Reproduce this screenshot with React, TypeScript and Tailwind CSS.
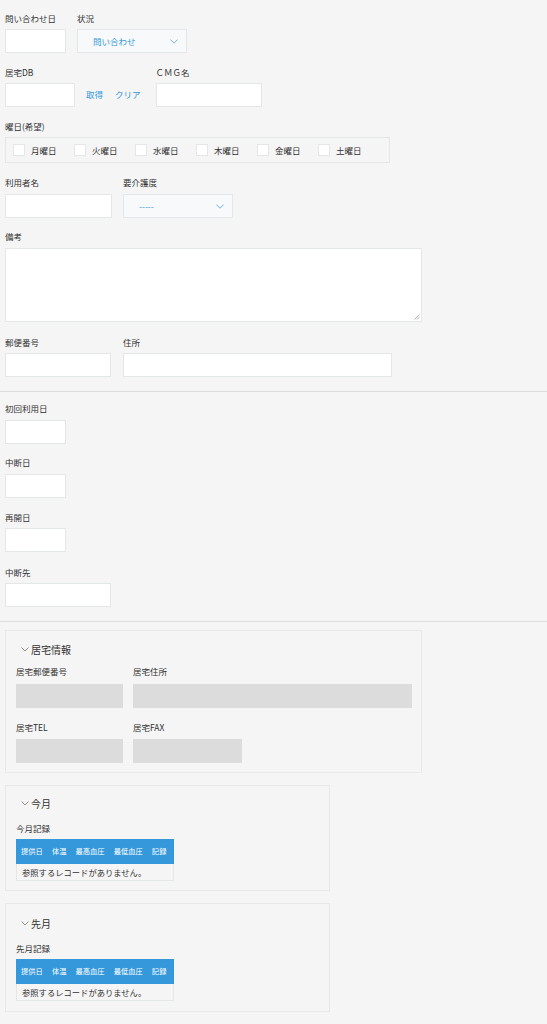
import React from "react";

const font = { fontFamily: '"Noto Sans CJK JP", "Noto Sans", sans-serif' };

function Label({ children, className = "" }: { children: React.ReactNode; className?: string }) {
  return <div className={`h-[12px] text-[8.5px] leading-[12px] text-[#333] whitespace-nowrap ${className}`}>{children}</div>;
}

function Input({ w, className = "" }: { w: string; className?: string }) {
  return <div className={`${w} h-[24px] bg-white border border-[#e3e7e8] ${className}`} />;
}

function Chevron() {
  return (
    <svg width="8" height="5" viewBox="0 0 8 5" fill="none">
      <path d="M0.5 0.6 L4 4.2 L7.5 0.6" stroke="#6fb1e6" strokeWidth="1" />
    </svg>
  );
}

function Select({ w, text }: { w: string; text: string }) {
  return (
    <div className={`${w} h-[24px] bg-[#f7f9fa] border border-[#e3e7e8] flex items-center justify-between pl-[15px] pr-[8px]`}>
      <span className="text-[8.5px] text-[#3498db]">{text}</span>
      <Chevron />
    </div>
  );
}

function Field({ label, children, className = "", gap = "mt-[5px]" }: { label: string; children: React.ReactNode; className?: string; gap?: string }) {
  return (
    <div className={`flex flex-col ${className}`}>
      <Label>{label}</Label>
      <div className={gap}>{children}</div>
    </div>
  );
}

function GroupHeader({ text }: { text: string }) {
  return (
    <div className="flex items-center h-[14px] pl-[15px] text-[10px] text-[#333]">
      <svg width="8" height="5" viewBox="0 0 8 5" fill="none" className="mr-[2px] mt-[1px]">
        <path d="M0.5 0.5 L4 4 L7.5 0.5" stroke="#888" strokeWidth="0.9" />
      </svg>
      {text}
    </div>
  );
}

function RecordTable() {
  const cols = ["提供日", "体温", "最高血圧", "最低血圧", "記録"];
  return (
    <div className="w-[158px]">
      <div className="h-[25px] bg-[#3498db] flex items-center pl-[5px] gap-[9px] text-[7.3px] text-white whitespace-nowrap overflow-hidden">
        {cols.map((c) => (
          <span key={c}>{c}</span>
        ))}
      </div>
      <div className="h-[17px] border border-t-0 border-[#e3e7e8] flex items-center pl-[5px] text-[8.3px] text-[#333] whitespace-nowrap">
        参照するレコードがありません。
      </div>
    </div>
  );
}

export default function App() {
  const days = ["月曜日", "火曜日", "水曜日", "木曜日", "金曜日", "土曜日"];
  return (
    <div className="w-[547px] min-h-[1024px] bg-[#f5f5f5] pb-[12px]" style={font}>
      <div className="px-[5px] pt-[12px]">
        {/* Row 1 */}
        <div className="flex gap-[11px]">
          <Field label="問い合わせ日">
            <Input w="w-[61px]" />
          </Field>
          <Field label="状況">
            <Select w="w-[110px]" text="問い合わせ" />
          </Field>
        </div>

        {/* Row 2 */}
        <div className="flex mt-[13px]">
          <Field label="居宅DB">
            <Input w="w-[70px]" />
          </Field>
          <div className="flex items-end ml-[11px] h-[41px] pb-[6px] gap-[12px] text-[8.5px] text-[#3498db]">
            <span>取得</span>
            <span>クリア</span>
          </div>
          <Field label="ＣＭＧ名" className="ml-[15px]">
            <Input w="w-[106px]" />
          </Field>
        </div>

        {/* Row 3 */}
        <div className="mt-[13px]">
          <Label>曜日(希望)</Label>
          <div className="mt-[5px] w-[385px] h-[26px] border border-[#e3e7e8] flex items-center pl-[7px]">
            {days.map((d) => (
              <div key={d} className="w-[61px] flex items-center">
                <div className="w-[12px] h-[12px] bg-white border border-[#e3e7e8]" />
                <span className="ml-[6px] text-[8.5px] text-[#333]">{d}</span>
              </div>
            ))}
          </div>
        </div>

        {/* Row 4 */}
        <div className="flex mt-[13px] gap-[11px]">
          <Field label="利用者名">
            <Input w="w-[107px]" className="mt-[1px]" />
          </Field>
          <Field label="要介護度">
            <div className="mt-[1px]">
              <Select w="w-[110px]" text="-----" />
            </div>
          </Field>
        </div>

        {/* Row 5 */}
        <div className="mt-[12px]">
          <Label>備考</Label>
          <div className="mt-[6px] w-[417px] h-[74px] bg-white border border-[#e3e7e8] relative">
            <svg width="6" height="6" viewBox="0 0 6 6" className="absolute right-[1px] bottom-[1px]">
              <path d="M5.5 0.5 L0.5 5.5 M5.5 3 L3 5.5" stroke="#999" strokeWidth="0.8" />
            </svg>
          </div>
        </div>

        {/* Row 6 */}
        <div className="flex mt-[14px] gap-[12px]">
          <Field label="郵便番号">
            <Input w="w-[106px]" />
          </Field>
          <Field label="住所">
            <Input w="w-[269px]" />
          </Field>
        </div>
      </div>

      <div className="mt-[14px] h-[1px] bg-[#dcdcdc]" />

      <div className="px-[5px] pt-[10px]">
        <Field label="初回利用日">
          <Input w="w-[61px]" className="mt-[1px]" />
        </Field>
        <Field label="中断日" className="mt-[12px]">
          <Input w="w-[61px]" className="mt-[1px]" />
        </Field>
        <Field label="再開日" className="mt-[13px]">
          <Input w="w-[61px]" />
        </Field>
        <Field label="中断先" className="mt-[14px]">
          <Input w="w-[106px]" />
        </Field>
      </div>

      <div className="mt-[14px] h-[1px] bg-[#dcdcdc]" />

      <div className="px-[5px] pt-[8px] flex flex-col">
        {/* 居宅情報 */}
        <div className="w-[417px] h-[143px] border border-[#e8e8e8] pt-[11px]">
          <GroupHeader text="居宅情報" />
          <div className="px-[10px]">
            <div className="flex mt-[9px] gap-[10px]">
              <Field label="居宅郵便番号" gap="mt-[7px]">
                <div className="w-[107px] h-[24px] bg-[#dcdcdc]" />
              </Field>
              <Field label="居宅住所" gap="mt-[7px]">
                <div className="w-[279px] h-[24px] bg-[#dcdcdc]" />
              </Field>
            </div>
            <div className="flex mt-[13px] gap-[10px]">
              <Field label="居宅TEL" gap="mt-[6px]">
                <div className="w-[107px] h-[24px] bg-[#dcdcdc]" />
              </Field>
              <Field label="居宅FAX" gap="mt-[6px]">
                <div className="w-[109px] h-[24px] bg-[#dcdcdc]" />
              </Field>
            </div>
          </div>
        </div>

        {/* 今月 */}
        <div className="mt-[12px] w-[325px] h-[106px] border border-[#e8e8e8] pt-[10px]">
          <GroupHeader text="今月" />
          <div className="px-[10px] mt-[12px]">
            <Label>今月記録</Label>
            <div className="mt-[5px]">
              <RecordTable />
            </div>
          </div>
        </div>

        {/* 先月 */}
        <div className="mt-[12px] w-[325px] h-[109px] border border-[#e8e8e8] pt-[12px]">
          <GroupHeader text="先月" />
          <div className="px-[10px] mt-[12px]">
            <Label>先月記録</Label>
            <div className="mt-[5px]">
              <RecordTable />
            </div>
          </div>
        </div>
      </div>
    </div>
  );
}
